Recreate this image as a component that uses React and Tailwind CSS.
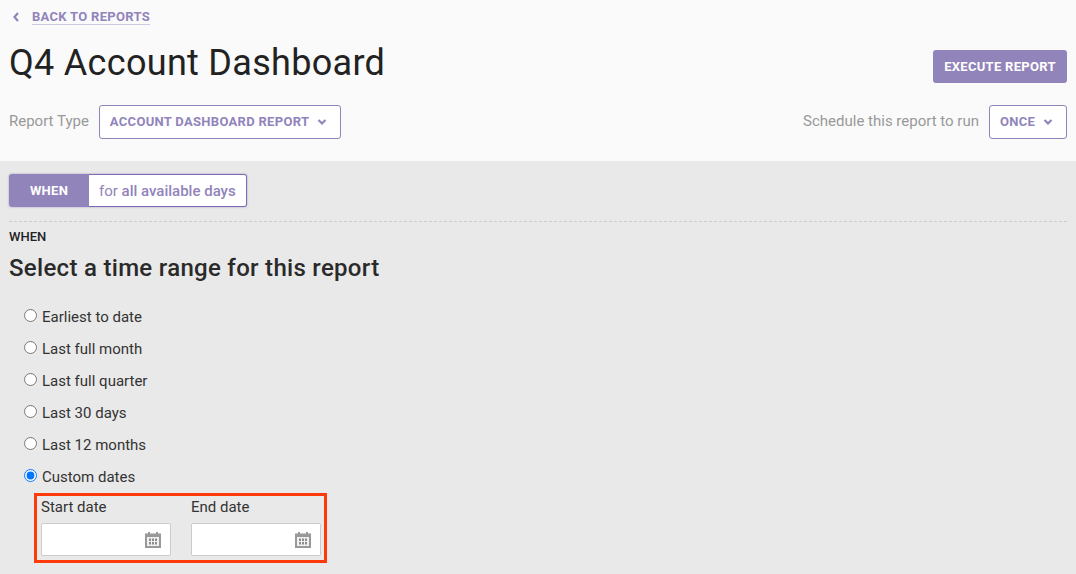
import React from 'react';

const purple = 'text-[#9184bb]';

const Chevron = ({ className }) => (
  <svg className={className} viewBox="0 0 10 10" fill="none" aria-hidden="true">
    <path d="M1.5 3 5 6.5 8.5 3" stroke="currentColor" strokeWidth="2.2" />
  </svg>
);

const CalendarIcon = () => (
  <svg className="w-4 h-4" viewBox="0 0 16 16" aria-hidden="true">
    <path fill="#999999" d="M3 0h2v1.5h6V0h2v1.5h3V16H0V1.5h3V0Z" />
    <rect x="2" y="5" width="12" height="9" fill="#f2f2f2" />
    <path
      fill="#8c8c8c"
      d="M4 6.5h2v2.5H4zM7 6.5h2v2.5H7zM10 6.5h2v2.5h-2zM4 10h2v2.5H4zM7 10h2v2.5H7zM10 10h2v2.5h-2z"
    />
  </svg>
);

const SelectButton = ({ label, className }) => (
  <button
    type="button"
    className={`flex items-center h-[34px] px-[10px] bg-white border border-[#9184bb] rounded-[3px] text-[13px] font-bold tracking-[0.3px] ${purple} ${className}`}
  >
    {label}
    <Chevron className="w-[10px] h-[10px] ml-[8px]" />
  </button>
);

const RadioRow = ({ label, checked }) => (
  <label className="flex items-center h-8 pl-[15px] text-[15px] text-[#333333]">
    <input type="radio" name="range" defaultChecked={checked} className="m-0 mr-[5px] mb-[3px] w-[13px] h-[13px]" />
    {label}
  </label>
);

const DateField = ({ label }) => (
  <div className="w-[130px]">
    <div className="text-[15px] leading-[20px] text-[#333333]">{label}</div>
    <div className="flex items-center justify-end h-[33px] mt-[6px] pr-[9px] bg-white border border-[#cccccc] rounded-[2px]">
      <CalendarIcon />
    </div>
  </div>
);

const App = () => {
  return (
    <div className="w-[1076px] h-[574px] overflow-hidden bg-[#e9e9e9] font-['Roboto',sans-serif]">
      <header className="h-[161px] bg-[#fafafa] px-[9px] pt-[9px]">
        <a className={`flex items-center h-[16px] pl-[3px] text-[13px] font-bold tracking-[0.3px] ${purple}`} href="#">
          <svg className="w-[8px] h-[12px] mr-[12px]" viewBox="0 0 8 12" fill="none" aria-hidden="true">
            <path d="M6 2 2.5 6 6 10" stroke="currentColor" strokeWidth="2.2" />
          </svg>
          <span className="border-b border-[#cfc9e2] leading-[15px]">BACK TO REPORTS</span>
        </a>
        <div className="flex items-start justify-between mt-[17px]">
          <h1 className="text-[36px] leading-[42px] font-normal text-[#222222] tracking-[0.3px]">Q4 Account Dashboard</h1>
          <button
            type="button"
            className="h-[33px] w-[134px] mt-[8px] bg-[#9184bb] text-white text-[13px] font-bold tracking-[0.3px] rounded-[3px]"
          >
            EXECUTE REPORT
          </button>
        </div>
        <div className="flex items-center justify-between mt-[21px]">
          <div className="flex items-center gap-[10px]">
            <span className="pb-[2px] text-[15px] text-[#999999]">Report Type</span>
            <SelectButton label="ACCOUNT DASHBOARD REPORT" className="w-[242px]" />
          </div>
          <div className="flex items-center gap-[10px]">
            <span className="pb-[2px] text-[15px] text-[#999999]">Schedule this report to run</span>
            <SelectButton label="ONCE" className="w-[78px]" />
          </div>
        </div>
      </header>

      <main className="px-[9px] pt-[13px]">
        <div className="flex w-[238px] h-[33px] rounded-[3px] shadow-[0_0_2px_rgba(80,60,140,0.5)]">
          <div className="flex items-center justify-center w-[80px] bg-[#9184bb] rounded-l-[3px] text-white text-[13px] font-bold tracking-[0.3px]">
            WHEN
          </div>
          <div className={`flex items-center flex-1 pl-[10px] pt-[2px] bg-white border border-[#7e6bb5] border-l-0 rounded-r-[3px] text-[15px] ${purple}`}>
            for&nbsp;<span className="font-medium">all available days</span>
          </div>
        </div>

        <div className="mt-[14px] border-t border-dashed border-[#cccccc]" />

        <div className="mt-[7px] text-[13px] leading-[15px] font-medium text-[#222222]">WHEN</div>
        <h2 className="mt-[9px] text-[24px] leading-[30px] font-medium text-[#2a2a2a] tracking-[0.3px]">
          Select a time range for this report
        </h2>

        <div className="mt-[18px]">
          <RadioRow label="Earliest to date" />
          <RadioRow label="Last full month" />
          <RadioRow label="Last full quarter" />
          <RadioRow label="Last 30 days" />
          <RadioRow label="Last 12 months" />
          <RadioRow label="Custom dates" checked />
        </div>

        <div className="flex gap-[20px] w-[293px] h-[70px] ml-[25px] pl-[4px] pt-px border-[3px] border-[#ff3a0a]">
          <DateField label="Start date" />
          <DateField label="End date" />
        </div>
      </main>
    </div>
  );
};

export default App;
